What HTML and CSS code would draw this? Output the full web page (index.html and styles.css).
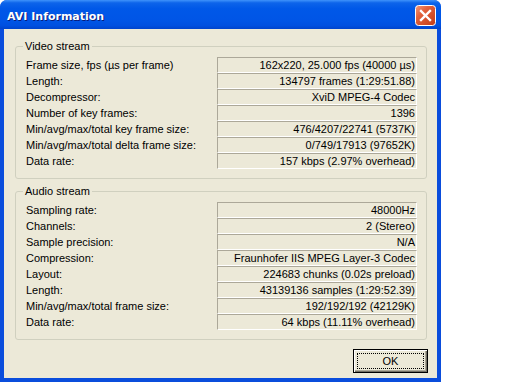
FILE: index.html
```html
<!DOCTYPE html>
<html lang="en">
<head>
    <meta charset="UTF-8">
    <title>AVI Information</title>
    <link rel="stylesheet" href="styles.css">
</head>
<body>

    <div class="window">
        <div class="titlebar">
            <span class="title">AVI Information</span>
            <span class="close">
                <svg width="21" height="21" viewBox="0 0 21 21">
                    <defs>
                        <linearGradient id="red" x1="0" y1="0" x2="1" y2="1">
                            <stop offset="0" stop-color="#f29a7c"/>
                            <stop offset="0.35" stop-color="#e2613c"/>
                            <stop offset="1" stop-color="#c23a15"/>
                        </linearGradient>
                    </defs>
                    <rect x="0.5" y="0.5" width="20" height="20" rx="3" fill="url(#red)" stroke="#ffffff"/>
                    <path d="M6 6 L15 15 M15 6 L6 15" stroke="#ffffff" stroke-width="2.4" stroke-linecap="square"/>
                </svg>
            </span>
        </div>

        <div class="client">
            <!-- Video -->
            <fieldset class="group">
                <legend>Video stream</legend>
                <div class="row"><span class="label">Frame size, fps (µs per frame)</span><span class="value">162x220, 25.000 fps (40000 µs)</span></div>
                <div class="row"><span class="label">Length:</span><span class="value">134797 frames (1:29:51.88)</span></div>
                <div class="row"><span class="label">Decompressor:</span><span class="value">XviD MPEG-4 Codec</span></div>
                <div class="row"><span class="label">Number of key frames:</span><span class="value">1396</span></div>
                <div class="row"><span class="label">Min/avg/max/total key frame size:</span><span class="value">476/4207/22741 (5737K)</span></div>
                <div class="row"><span class="label">Min/avg/max/total delta frame size:</span><span class="value">0/749/17913 (97652K)</span></div>
                <div class="row"><span class="label">Data rate:</span><span class="value">157 kbps (2.97% overhead)</span></div>
            </fieldset>

            <!-- Audio -->
            <fieldset class="group audio">
                <legend>Audio stream</legend>
                <div class="row"><span class="label">Sampling rate:</span><span class="value">48000Hz</span></div>
                <div class="row"><span class="label">Channels:</span><span class="value">2 (Stereo)</span></div>
                <div class="row"><span class="label">Sample precision:</span><span class="value">N/A</span></div>
                <div class="row"><span class="label">Compression:</span><span class="value">Fraunhofer IIS MPEG Layer-3 Codec</span></div>
                <div class="row"><span class="label">Layout:</span><span class="value">224683 chunks (0.02s preload)</span></div>
                <div class="row"><span class="label">Length:</span><span class="value">43139136 samples (1:29:52.39)</span></div>
                <div class="row"><span class="label">Min/avg/max/total frame size:</span><span class="value">192/192/192 (42129K)</span></div>
                <div class="row"><span class="label">Data rate:</span><span class="value">64 kbps (11.11% overhead)</span></div>
            </fieldset>

            <div class="buttons">
                <button class="btn"><span>OK</span></button>
            </div>
        </div>
    </div>

</body>
</html>
```

FILE: styles.css
```css
/* General */
body {
    margin: 0;
    background: #ffffff;
    font-family: 'Liberation Sans', Arial, sans-serif;
    font-size: 11px;
    color: #000;
}

/* Window frame */
.window {
    width: 441px;
    border-radius: 7px 7px 0 0;
    overflow: hidden;
    background: #0a4ddc;
}

.titlebar {
    height: 29px;
    display: flex;
    justify-content: space-between;
    align-items: flex-start;
    padding: 0 5px 0 7px;
    background: linear-gradient(to bottom, #3f93fb 0%, #0d64ea 10%, #0058e8 30%, #0055e6 70%, #0050e0 88%, #0044cc 100%);
}

.title {
    padding-top: 10px;
    line-height: 13px;
    font-family: 'DejaVu Sans', sans-serif;
    font-weight: bold;
    font-size: 11px;
    color: #fff;
    text-shadow: 1px 1px #0a1c7a;
}

.close {
    margin-top: 5px;
    width: 21px;
    height: 21px;
}

.close svg {
    display: block;
}

/* Dialog body */
.client {
    margin: 0 4px 4px 4px;
    padding: 11px 10px 5px 11px;
    background: #ece9d8;
}

/* Group boxes */
.group {
    margin: 0;
    padding: 4px 9px 9px 10px;
    border: 1px solid #d0d0bf;
    border-radius: 3px;
}

.group.audio {
    margin-top: 6px;
}

.group legend {
    padding: 0 2px;
    margin-left: -3px;
    line-height: 13px;
}

/* Label / value rows */
.row {
    display: grid;
    grid-template-columns: 1fr 200px;
    align-items: center;
    height: 16px;
}

.label {
    white-space: nowrap;
    line-height: 14px;
}

.value {
    box-sizing: border-box;
    height: 16px;
    padding-right: 1px;
    line-height: 14px;
    text-align: right;
    white-space: nowrap;
    border-top: 1px solid #aca899;
    border-left: 1px solid #aca899;
    border-bottom: 1px solid #fff;
    border-right: 1px solid #fff;
}

/* OK button */
.buttons {
    display: flex;
    justify-content: flex-end;
    margin-top: 9px;
}

.btn {
    width: 75px;
    height: 24px;
    margin-right: -1px;
    padding: 3px;
    background: #ece9d8;
    border: 1px solid #000;
    box-shadow: inset 1px 1px #fff, inset -1px -1px #716f64, inset -2px -2px #aca899;
    font-family: 'Liberation Sans', Arial, sans-serif;
    font-size: 11px;
    color: #000;
}

.btn span {
    display: block;
    height: 100%;
    box-sizing: border-box;
    border: 1px dotted #000;
    line-height: 14px;
}
```
